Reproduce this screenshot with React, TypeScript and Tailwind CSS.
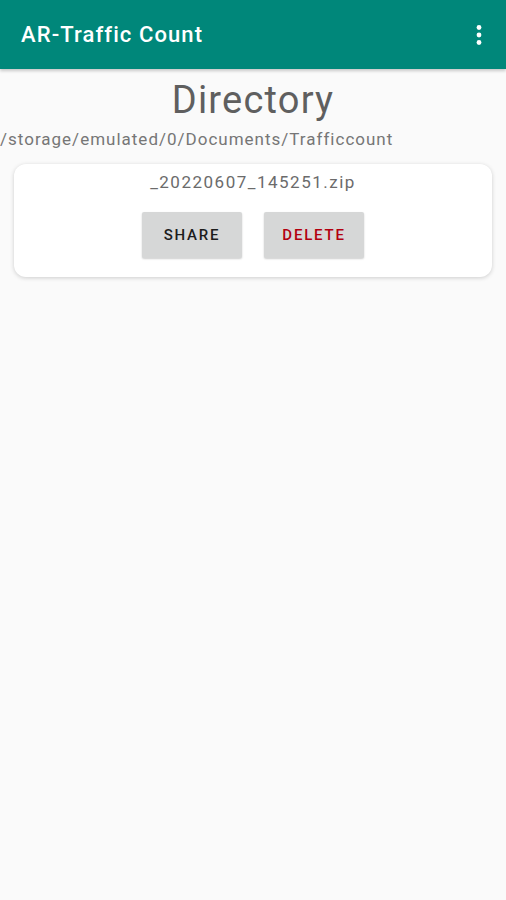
export default function App() {
  return (
    <div
      className="min-h-[900px] w-full bg-[#fafafa]"
      style={{ fontFamily: "Roboto, 'Noto Sans', sans-serif" }}
    >
      {/* APP BAR */}
      <div className="flex h-[69px] items-center justify-between bg-[#00877a] pl-[21px] pr-[23px] shadow-[0_2px_3px_rgba(0,0,0,0.2)]">
        <h1 className="text-[22px] font-medium tracking-[1.1px] text-white">AR-Traffic Count</h1>
        <svg width="8" height="22" viewBox="0 0 8 22" className="text-white">
          <circle cx="4" cy="3.5" r="2.4" fill="currentColor" />
          <circle cx="4" cy="11" r="2.4" fill="currentColor" />
          <circle cx="4" cy="18.5" r="2.4" fill="currentColor" />
        </svg>
      </div>

      {/* DIRECTORY */}
      <div className="pt-[8px] text-center text-[38px] leading-[46px] tracking-[1.2px] text-[#5f5f5f]">Directory</div>
      <p className="pt-[6px] text-[17px] leading-[20px] tracking-[1px] text-[#767676]">/storage/emulated/0/Documents/Trafficcount</p>

      {/* FILE CARD */}
      <div className="mx-[14px] mt-[15px] flex flex-col items-center rounded-[12px] bg-white pb-[19px] pt-[8px] shadow-[0_1px_4px_rgba(0,0,0,0.18)]">
        <p className="text-[17px] leading-[20px] tracking-[1.5px] text-[#6b6b6b]">_20220607_145251.zip</p>
        <div className="mt-[20px] flex gap-[22px]">
          <button className="h-[46px] w-[100px] rounded-[2px] bg-[#d6d7d7] text-[15px] font-medium tracking-[1.8px] text-[#1c1c1c] shadow-[0_1px_2px_rgba(0,0,0,0.2)]">
            SHARE
          </button>
          <button className="h-[46px] w-[100px] rounded-[2px] bg-[#d6d7d7] text-[15px] font-medium tracking-[1.8px] text-[#b3000f] shadow-[0_1px_2px_rgba(0,0,0,0.2)]">
            DELETE
          </button>
        </div>
      </div>
    </div>
  );
}
